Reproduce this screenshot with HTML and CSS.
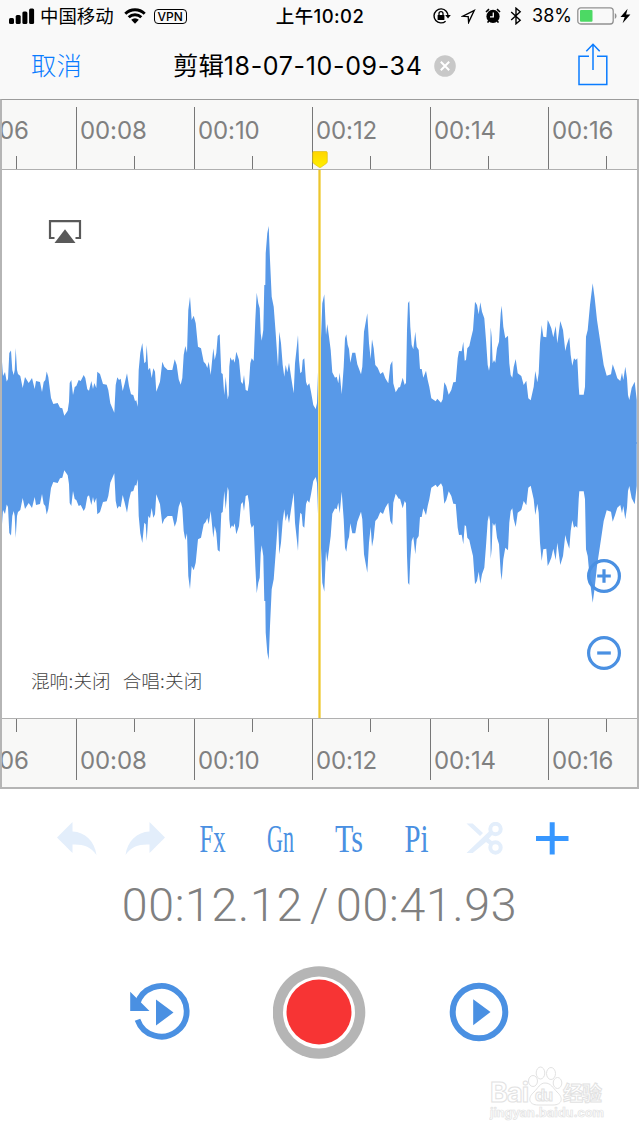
FILE: index.html
```
<!DOCTYPE html>
<html lang="zh-CN">
<head>
    <meta charset="UTF-8">
    <meta name="viewport" content="width=device-width, initial-scale=1.0">
    <title>剪辑18-07-10-09-34</title>
    <link rel="stylesheet" href="styles.css">
</head>
<body>

    <header class="top">
        <div class="status-bar">
            <div class="status-left">
                <svg class="signal" width="26" height="16" viewBox="0 0 26 16">
                    <rect x="0" y="10" width="5" height="6" rx="1.5"/>
                    <rect x="6.7" y="7" width="5" height="9" rx="1.5"/>
                    <rect x="13.4" y="3.6" width="5" height="12.4" rx="1.5"/>
                    <rect x="20.1" y="0.5" width="5" height="15.5" rx="1.5"/>
                </svg>
                <span class="carrier">中国移动</span>
                <svg class="wifi" width="22" height="16" viewBox="0 0 22 16">
                    <path d="M1.3 5.8a13.8 13.8 0 0 1 19.4 0M4.7 9.3a9 9 0 0 1 12.6 0" fill="none" stroke="#000" stroke-width="2.9"/>
                    <path d="M7.2 11.8a5.4 5.4 0 0 1 7.6 0L11 15.7z"/>
                </svg>
                <span class="vpn">VPN</span>
            </div>
            <div class="clock">上午10:02</div>
            <div class="status-right">
                <svg width="18" height="16" viewBox="0 0 18 16">
                    <path d="M13.2 3.2A7 7 0 1 0 12.6 13.2M13.2 3.2A7 7 0 0 1 15 8" fill="none" stroke="#000" stroke-width="1.4"/>
                    <path d="M12.2 7h5.6L15 10.4z"/>
                    <rect x="4.6" y="7" width="6.8" height="5" rx=".6"/>
                    <path d="M6 7V5.6a2 2 0 0 1 4 0V7" fill="none" stroke="#000" stroke-width="1.3"/>
                </svg>
                <svg class="locate" width="15" height="15" viewBox="0 0 15 15">
                    <path d="M1.5 7.3L13.3 1.4 7.6 13.4 7.2 7.7z" fill="none" stroke="#000" stroke-width="1.3"/>
                </svg>
                <svg class="alarm" width="16" height="16" viewBox="0 0 16 16">
                    <circle cx="8" cy="8.4" r="6.6"/>
                    <path d="M1 4L4 1.2M15 4L12 1.2M3.800 12.800L2.600 14.600M12.200 12.800L13.400 14.600" stroke="#000" stroke-width="1.600"/>
                    <path d="M8.3 4.6V8.8H5" fill="none" stroke="#fff" stroke-width="1.3"/>
                </svg>
                <svg class="bluetooth" width="12" height="18" viewBox="0 0 12 18">
                    <path d="M1.2 5L10.2 13.2 6 16.8V1.2L10.2 4.8 1.2 13" fill="none" stroke="#000" stroke-width="1.4"/>
                </svg>
                <span class="percent">38%</span>
                <svg class="battery" width="41" height="18" viewBox="0 0 41 18">
                    <rect x=".8" y=".8" width="35.4" height="16.2" rx="3" fill="none" stroke="#919191" stroke-width="1.3"/>
                    <rect x="3" y="3" width="12.5" height="11.8" rx="1" fill="#4cd964"/>
                    <path d="M37.8 6a3.4 3.4 0 0 1 0 6z" fill="#919191"/>
                </svg>
                <svg width="11" height="16" viewBox="0 0 11 16">
                    <path d="M7.6.8L.5 9h4.2L2.6 15.2 10.4 6.6H6.1z"/>
                </svg>
            </div>
        </div>

        <nav class="nav-bar">
            <span class="cancel">取消</span>
            <div class="title">
                <span>剪辑<span class="date">18-07-10-09-34</span></span>
                <svg width="22" height="22" viewBox="0 0 22 22">
                    <circle cx="11" cy="11" r="10.8" fill="#c8c8c8"/>
                    <path d="M6.8 6.8l8.4 8.4M15.2 6.8l-8.4 8.4" stroke="#fff" stroke-width="2"/>
                </svg>
            </div>
            <svg class="share" width="30" height="43" viewBox="0 0 30 43">
                <path d="M11 13.2H1V41.5H28.8V13.2H19M15 27V1.5M8.3 8.2L15 1.3l6.7 6.9" fill="none" stroke="#0a7cff" stroke-width="1.5"/>
            </svg>
        </nav>
    </header>

    <main class="editor">
        <div class="ruler ruler-top">
            <span class="mark">00:06</span>
            <span class="mark">00:08</span>
            <span class="mark">00:10</span>
            <span class="mark">00:12</span>
            <span class="mark">00:14</span>
            <span class="mark">00:16</span>
        </div>

        <div class="track">
            <svg class="wave" viewBox="2 170 635 548">
                <defs>
                    <!-- upper half of the waveform, mirrored around y=443 -->
                    <path id="half" d="M2 444V361.7L3 376 5 372 6.7 381.5 8 379 9.3 353 11 350.5 12.3 370 13.7 375 14.7 370 15.7 348 17 370 18 374 20.3 376 22.7 388 25 377 28.7 383 32 378 34.7 389 36 381 40 382 42 392 43.7 382 45.3 380 46.7 371.5 48.3 377 51 398 53.3 404 57.7 403 60 407.7 62.3 408.3 64.3 415.7 67.7 410.7 69 401.7 69.7 383 71.3 380 73 395 74.7 387 76.3 386 78.7 380 80.7 381 83.7 375 85.3 378 87.3 389.3 89 390.7 91.3 381 93 389 94.3 383 96.3 388 97.3 371.7 100 374 103 384 106.7 384.7 108.3 390 110.3 403.3 114.3 412.7 115.7 385 117.3 377.3 119 380 120.7 378.7 122.7 391 124.7 383.3 127 373.3 129 386 131 394.3 133.3 395 135 401 136.3 400.3 137.7 406.7 138.7 370 140.3 352.7 142.3 343 144.3 363.3 145.7 361.7 146.7 345 148.3 370 150 367.7 151.7 378 153.3 368.3 155 371.7 156.3 391.7 160 381.7 162.3 361.7 164.3 366.7 167.7 370 172.3 370 174.7 359.3 176.7 365 178.7 379.3 180.7 384.7 182.3 378 183.7 355 185.3 346 187 352.7 188.3 310 190 296.7 191.7 320 193.7 315.7 195.7 323.3 198 346.7 201 348.3 203.7 361.7 205.7 364 207.3 368 208.7 361.7 210.7 375 213.3 348.3 214.7 360 216.3 353 217.7 336 219.7 334.3 221.3 373 222.7 374 224.3 395 225.7 376.7 227.7 399 228.7 395 229.3 366.7 230.3 357.3 232 360.7 233.3 358.7 234.7 362.7 236.3 351.7 239 360 241 381.7 242.7 384 244 375 245.7 390 247.7 391 249 383 250.3 363.3 251.7 358.3 253.7 361 255.3 320 256.7 292.7 258.3 303.3 259.7 308.3 260.7 333.3 261.7 340.7 263.3 330 264.3 285 265.3 285 265.7 253.3 267.3 233.3 268.7 226 270 260 271.7 296.7 273.7 306.7 275.7 333.3 278 366.7 279.3 331.7 281 343.3 282.7 365 284.3 376.7 285.7 365 287.3 372.3 289 362.7 291.3 378.3 293.7 393.3 295 363.3 297 345 298 335 299 360 300.3 373.3 301.7 371.7 302.7 360 304.3 358.3 306 381.7 307.3 385.7 309.3 383.3 311 391.7 313.3 405 315.7 409 317 403 318 371.7 320 370 321 338.3 322.3 303.3 324.3 294.3 326 335 327.3 324 329 336.7 330.7 350 332.3 372.3 335 377.7 336.7 376.7 338.3 383.3 339.7 372.7 341.7 394.3 343.7 366.7 345 338.3 346.3 334.3 347.7 345 349 349 350.3 362.7 352.3 352.7 355.3 352.7 357.3 364.3 361 374.3 362.3 366.7 364 331.7 367.3 313.3 369 343.3 370.7 359 372 339.3 373.7 348.3 375.3 365 377.7 367.7 380.3 374 383 372 385.3 378.3 388.3 383.3 390.3 365 392.3 361 393.3 383.3 395.7 392.3 398.7 387.3 400 387.3 402.7 377.7 404.7 385 406 382.7 407 330 408 303.3 409.3 301 410.3 326.7 411.7 345 413.3 349.3 415.3 331.7 416.7 346.7 418.7 350 420 369 421.7 369 423.3 377.7 426 370.7 427.7 380 429.3 386.7 431.3 398.3 435.7 401.3 437.3 398.7 441 402.7 442.7 399.3 444.3 382.3 446.3 386 448.7 394.7 451.3 390 453.3 382.3 455.7 382 457.7 358.3 459 351 461.7 351.3 463.3 341.7 464.7 360.7 466 360 467.3 348.3 469.3 346 471 338.3 473 330 475 301.7 477 305 478.7 314.3 480.3 302.3 482 311.7 484.3 318.3 486 340 487.7 365 489 370.7 490 365 490.7 327.3 491.7 337 492.7 363.3 494 360 495.3 362.7 497 348.3 499 341.7 500.7 313.3 501.7 305.7 503.3 326.7 505.3 338.3 508 335.7 509.3 363.3 510.7 375 512.3 377.7 513.7 366.7 515.7 359 517.7 373.3 521.3 376 523.7 385 526.3 380.7 528.3 398.3 530.7 400.3 533.7 386.7 535.3 371 537.3 382.3 538.7 373.3 540 343.3 541.7 325 543.3 336.7 546.3 337.3 547.7 320 549.3 323.3 551.3 328.3 553.3 337.3 555.7 326 557.3 343.3 558.7 333.3 560.3 321 563 330 565.3 351 566.7 345 569.3 337.3 570.7 355 572.3 365.7 574 358.3 575.7 360 577.3 358.3 578.7 386.7 579.3 394.7 583.7 394.7 585 386.7 586 336.7 587.7 330 590 305 592.7 283.3 594.7 298.3 597 320 600 340 603.7 365 606.7 375.7 611 374.3 612.7 364.3 615.3 371.7 617.3 378.3 620.3 381 622 372.7 623.3 380 625.3 366.7 627 378.3 628 395 629.3 400 631.7 387.7 634.7 381.7 636.7 400V444z"/>
                </defs>
                <use href="#half"/>
                <use href="#half" transform="translate(0 886) scale(1 -1)"/>
            </svg>

            <svg class="airplay" width="34" height="24" viewBox="0 0 34 24">
                <path d="M6.5 18H2V1.2H32V18H27.5" fill="none" stroke="#595959" stroke-width="2.2"/>
                <path d="M17 9.3L27.5 23H6.5z" fill="#595959"/>
            </svg>

            <div class="zoom">
                <svg width="34" height="34" viewBox="0 0 34 34">
                    <circle cx="17" cy="17" r="15.4"/>
                    <path d="M10.2 17h13.6M17 10.2v13.6"/>
                </svg>
                <svg width="34" height="34" viewBox="0 0 34 34">
                    <circle cx="17" cy="17" r="15.4"/>
                    <path d="M10.2 17h13.6"/>
                </svg>
            </div>

            <div class="effects"><span>混响:关闭</span><span>合唱:关闭</span></div>

            <div class="playhead">
                <svg width="16" height="17" viewBox="0 0 16 17">
                    <defs>
                        <linearGradient id="gold" x1="0" y1="0" x2="0" y2="1">
                            <stop offset="0" stop-color="#ffd500"/>
                            <stop offset="1" stop-color="#fff000"/>
                        </linearGradient>
                    </defs>
                    <path d="M2 .5h12a1.3 1.3 0 0 1 1.3 1.3V10.5c0 .8-.3 1.4-1 2L9.3 16a2 2 0 0 1-2.6 0L1.7 12.5c-.7-.6-1-1.2-1-2V1.8A1.3 1.3 0 0 1 2 .5z" fill="url(#gold)" stroke="#d9b90c" stroke-width=".6"/>
                </svg>
            </div>
        </div>

        <div class="ruler ruler-bottom">
            <span class="mark">00:06</span>
            <span class="mark">00:08</span>
            <span class="mark">00:10</span>
            <span class="mark">00:12</span>
            <span class="mark">00:14</span>
            <span class="mark">00:16</span>
        </div>
    </main>

    <section class="tools">
        <svg class="off" viewBox="0 0 40 34"><path d="M0 15.5L15.5 0V9.5C28 10 37.5 19 39.5 33 33.500 24.500 26 22 15.500 22.500V31z"/></svg>
        <svg class="off" viewBox="0 0 40 34"><path d="M40 15.500L24.500 0V9.500C12 10 2.500 19 .5 33 6.500 24.500 14 22 24.500 22.500V31z"/></svg>
        <svg viewBox="0 0 40 34"><text x="6.500" y="29.500" textLength="26" lengthAdjust="spacingAndGlyphs">Fx</text></svg>
        <svg viewBox="0 0 40 34"><text x="6" y="29.500" textLength="27" lengthAdjust="spacingAndGlyphs">Gn</text></svg>
        <svg viewBox="0 0 40 34"><text x="6" y="29.500" textLength="28" lengthAdjust="spacingAndGlyphs">Ts</text></svg>
        <svg viewBox="0 0 40 34"><text x="7.500" y="29.500" textLength="24" lengthAdjust="spacingAndGlyphs">Pi</text></svg>
        <svg class="off" viewBox="0 0 40 34">
            <path d="M1.500 1.500h6.200L18 11 15 14zM1.500 31h6.200L20.500 20.500 27.500 12.500 24 9.500z"/>
            <path d="M19 18.500L22.500 15.500 28 20 25 23z"/>
            <circle cx="30.500" cy="7" r="5.200"/>
            <circle cx="30.500" cy="25.500" r="5.200"/>
        </svg>
        <svg class="add" viewBox="0 0 40 34"><path d="M3 16.500H35.500M19.200 .2V32.500"/></svg>
    </section>

    <div class="timer"><span>00:12.12</span><span class="slash">/</span><span>00:41.93</span></div>

    <section class="controls">
        <svg width="60" height="60" viewBox="0 0 60 60">
            <path d="M7 22.500A25.300 25.300 0 1 1 7.500 37.700" fill="none" stroke="#4a90e2" stroke-width="5.800"/>
            <path d="M.2 9.700L19.500 29H.2zM26 17.500L43.500 30.500 26 43.500z" fill="#4a90e2"/>
        </svg>
        <svg width="93" height="93" viewBox="0 0 93 93">
            <circle cx="46" cy="46.500" r="46.300" fill="#b5b5b5"/>
            <circle cx="46" cy="46.500" r="36" fill="#fff"/>
            <circle cx="46" cy="46" r="32.500" fill="#f73434"/>
        </svg>
        <svg width="60" height="60" viewBox="0 0 60 60">
            <circle cx="30" cy="30" r="26.300" fill="none" stroke="#4a90e2" stroke-width="6"/>
            <path d="M24.200 17.200L41.500 30 24.200 43.200z" fill="#4a90e2"/>
        </svg>
    </section>

    <footer class="brand">
        <svg width="118" height="60" viewBox="0 0 118 60">
            <text class="brand-name" x="1" y="37" textLength="39">Bai</text>
            <path d="M56 18c-5 0-7 5-11 9-7 6-5 13 4 13h15c9 0 11-7 4-13-4-4-6-9-12-9z"/>
            <ellipse cx="44" cy="16" rx="4.500" ry="5.500"/>
            <ellipse cx="51.500" cy="8" rx="4.300" ry="6"/>
            <ellipse cx="62" cy="8.500" rx="4.500" ry="6"/>
            <ellipse cx="68.500" cy="18" rx="4.300" ry="5.500"/>
            <text class="brand-du" x="46" y="36" textLength="18">du</text>
            <text class="brand-cn" x="74" y="36" textLength="39">经验</text>
            <text class="brand-url" x="1" y="52" textLength="114">jingyan.baidu.com</text>
        </svg>
    </footer>

</body>
</html>
```
FILE: styles.css
```
* {
    box-sizing: border-box;
}
body {
    font-family: Inter, "Noto Sans CJK SC", sans-serif;
    width: 639px;
    height: 1136px;
    margin: 0;
    background: white;
    color: black;
    overflow: hidden;
}
svg {
    display: block;
    flex-shrink: 0;
}
.top {
    height: 99px;
    background: #f9f9f9;
}
.status-bar {
    display: grid;
    grid-template-columns: 1fr auto 1fr;
    align-items: center;
    height: 32px;
    padding: 0 8px 0 9px;
    font-size: 18px;
    line-height: 32px;
    white-space: nowrap;
}
.status-left, .status-right {
    display: flex;
    align-items: center;
}
.status-right {
    justify-content: flex-end;
}
.carrier {
    margin: 0 10px 0 5px;
    font-size: 18.4px;
}
.vpn {
    margin-left: 8px;
    padding: 0 3px;
    border: 1.5px solid black;
    border-radius: 4px;
    font-size: 12px;
    font-weight: 500;
    line-height: 13px;
}
.clock {
    font-weight: 500;
    font-size: 18.5px;
    letter-spacing: 0.4px;
}
.locate {
    margin-left: 10px;
}
.alarm {
    margin-left: 9px;
}
.bluetooth {
    margin-left: 9px;
}
.percent {
    margin: 0 5px 0 10px;
    font-size: 18px;
}
.battery {
    margin-right: 2px;
}
.nav-bar {
    display: flex;
    align-items: center;
    height: 67px;
    padding: 0 31px;
    font-size: 25.4px;
    line-height: 66px;
}
.cancel {
    width: 142px;
    color: #0a7cff;
    font-weight: 300;
}
.title {
    display: flex;
    flex: 1;
    align-items: center;
    gap: 12px;
    white-space: nowrap;
}
.date {
    font-size: 25px;
    letter-spacing: 0.65px;
}
.share {
    margin-bottom: 2px;
}
.editor {
    height: 690px;
    border: 2px solid #b5b5b5;
    border-top: 1px solid #9c9c9c;
}
.ruler {
    display: flex;
    height: 70px;
    padding: 7px 0;
    background: #f8f8f7;
    overflow: hidden;
}
.ruler-top {
    padding-bottom: 0;
    border-bottom: 1px solid #b0b0b0;
}
.ruler-bottom {
    height: 69px;
    padding-top: 0;
    border-top: 1px solid #b0b0b0;
}
.mark {
    flex: 0 0 118px;
    padding-left: 3px;
    border-left: 1px solid #777;
    background: linear-gradient(#777, #777) no-repeat 57px 100% / 1px 13px;
    color: #808080;
    font-size: 24px;
    line-height: 47px;
    letter-spacing: -0.1px;
}
.mark:first-child {
    margin-left: -44px;
}
.ruler-bottom .mark {
    padding-top: 18px;
    background-position: 57px 0;
}
.track {
    position: relative;
    height: 548px;
}
.wave {
    width: 635px;
    height: 548px;
    fill: #5899e8;
}
.airplay {
    position: absolute;
    left: 46px;
    top: 50px;
}
.zoom {
    position: absolute;
    right: 16px;
    top: 389px;
    display: flex;
    flex-direction: column;
    gap: 43px;
    fill: none;
    stroke: #4a90e2;
    stroke-width: 3.2;
}
.effects {
    position: absolute;
    left: 29px;
    bottom: 22px;
    display: flex;
    gap: 12px;
    color: #444;
    font-size: 18.6px;
    font-weight: 300;
    line-height: 30px;
}
.playhead {
    position: absolute;
    left: 316px;
    top: 0;
    width: 3px;
    height: 548px;
    background: linear-gradient(90deg, #f4dc78 1px, #ecc430 1px, #ecc430 2px, #f4dc78 2px);
}
.playhead svg {
    position: absolute;
    left: -6px;
    top: -19px;
}
.tools {
    display: flex;
    gap: 28px;
    height: 63px;
    margin: 33px 0 0 57px;
    fill: #4a90e2;
    font-family: "Liberation Serif", serif;
    font-size: 41px;
}
.tools svg {
    width: 40px;
    height: 34px;
}
.tools .off {
    fill: #e3eefb;
}
.off circle {
    fill: none;
    stroke: #e3eefb;
    stroke-width: 4;
}
.add {
    stroke: #3797ff;
    stroke-width: 5;
}
.timer {
    display: flex;
    justify-content: center;
    height: 40px;
    color: #808080;
    font-family: Roboto, sans-serif;
    font-size: 46.5px;
    font-weight: 300;
    line-height: 40px;
    letter-spacing: 0.7px;
}
.slash {
    margin: 0 7px;
}
.controls {
    display: flex;
    align-items: center;
    justify-content: space-between;
    height: 92px;
    margin: 41px 130px 0;
}
.brand {
    display: flex;
    justify-content: flex-end;
    padding: 7px 32px 0 0;
}
.brand svg {
    fill: white;
    stroke: #e2e2e2;
    stroke-width: 1;
    font-weight: bold;
}
.brand-name {
    font-size: 27px;
}
.brand-du {
    font-size: 16px;
}
.brand-cn {
    font-size: 20px;
}
.brand-url {
    font-size: 12.5px;
    stroke-width: 0.7;
}
```
